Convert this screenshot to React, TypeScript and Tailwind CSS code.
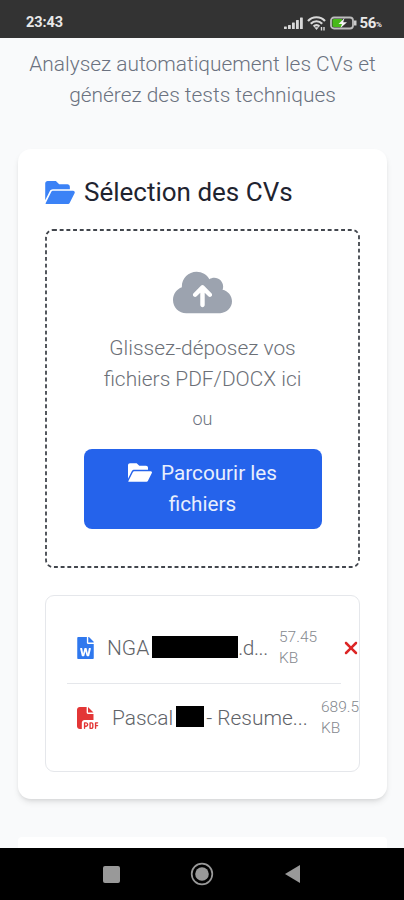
import { FaFileWord } from "react-icons/fa";
import { FaCloudArrowUp, FaFilePdf, FaXmark } from "react-icons/fa6";

function StatusBar() {
  return (
    <header className="flex h-[38px] shrink-0 items-center bg-[#333333] pt-[7px] pr-[22px] pl-[26px] text-[14px] font-bold text-[#e8e8e8]">
      <span className="grow pt-px text-[14.5px] tracking-[-0.1px]">23:43</span>
      <svg width="20" height="14" viewBox="0 0 20 14" fill="#d8d8d8">
        <rect x="0" y="10.5" width="2.8" height="2.5" rx="0.5" />
        <rect x="4" y="9" width="2.8" height="4" rx="0.5" />
        <rect x="8" y="6.5" width="2.8" height="6.5" rx="0.5" />
        <rect x="12" y="4" width="2.8" height="9" rx="0.5" />
        <rect x="16" y="1.5" width="2.8" height="11.5" rx="0.5" />
      </svg>
      <svg
        className="ml-[3px]"
        width="19"
        height="16"
        viewBox="0 0 19 16"
        fill="none"
        stroke="#d8d8d8"
        strokeWidth="2.2"
      >
        <path d="M1 6C5.5 1 13.5 1 18 6M3.8 8.8C7 5.4 12 5.4 15.2 8.8M6.6 11.5C8.3 9.7 10.7 9.7 12.4 11.5" />
        <path d="M7.2 12.3L9.5 15L11.8 12.3Z" fill="#d8d8d8" stroke="none" />
        <path d="M14.5 12V15.5M17 12V15.5" strokeWidth="1.4" />
      </svg>
      <svg className="ml-[4px]" width="27" height="14" viewBox="0 0 27 14">
        <rect
          x="1"
          y="1.5"
          width="22"
          height="11"
          rx="3"
          fill="#333333"
          stroke="#bdbdbd"
          strokeWidth="1.8"
        />
        <path d="M4 3H12V11H4Q2.5 11 2.5 9.5V4.5Q2.5 3 4 3Z" fill="#48b91a" />
        <path d="M14.5 2L8.5 8H12L10.5 12L17 6.2H13.2Z" fill="#f4f4f4" />
        <path d="M24 4.5H26.500V9.500H24Z" fill="#cccccc" />
      </svg>
      <span className="ml-[2px] pt-px text-[15px] tracking-[-0.3px]">56</span>
      <span className="pt-[5px] text-[8px]">%</span>
    </header>
  );
}

function FolderOpenIcon({ className }: { className: string }) {
  return (
    <svg className={className} viewBox="0 32 576 448" fill="currentColor">
      <path d="M147.8 192H480V144C480 117.500 458.500 96 432 96h-160l-64-64h-160C21.500 32 0 53.500 0 80v328.400l90.500-181.100C101.400 205.600 123.400 192 147.800 192z" />
      <path d="M543.100 224H147.800C135.700 224 124.600 230.800 119.200 241.700L8 464Q4 480 20 480h427.100c12.100 0 23.200-6.900 28.600-17.700l96-192C583.200 249 567.700 224 543.100 224z" />
    </svg>
  );
}

function DropZone() {
  return (
    <div className="relative mt-[20px] flex h-[339px] flex-col items-center px-[38px] pt-[37px] text-[#6b7280]">
      <svg
        className="pointer-events-none absolute inset-0"
        width="315"
        height="339"
        fill="none"
      >
        <rect
          x="1"
          y="1"
          width="313"
          height="337"
          rx="7"
          stroke="#42464d"
          strokeWidth="1.8"
          strokeDasharray="3.9 2.8"
        />
      </svg>
      <FaCloudArrowUp className="h-[53px] w-[59px] text-[#9ca3af]" />
      <p className="mt-[14px] text-center text-[20.9px] leading-[31px] whitespace-nowrap text-[#6c7077]">
        Glissez-déposez vos
        <br />
        fichiers PDF/DOCX ici
      </p>
      <p className="mt-[11px] text-[18px] leading-[26px]">ou</p>
      <button className="mt-[17px] h-[80px] w-[238px] rounded-[8px] bg-[#2563eb] text-[20.7px] leading-[31.5px] font-normal text-[#e8effd]">
        <FolderOpenIcon className="mr-[9px] inline h-[19px] w-[24px] align-[-2px] text-white" />
        Parcourir les
        <br />
        fichiers
      </button>
    </div>
  );
}

function FileList() {
  return (
    <ul className="mt-[27px] h-[177px] overflow-hidden rounded-[9px] border border-[#e5e7eb] px-[21px] pt-[17px] text-[20.9px] text-[#5f6368]">
      <li className="flex h-[71px] w-[274px] items-center border-b border-[#e5e7eb]">
        <FaFileWord className="ml-[10px] h-[22px] w-[17px] shrink-0 text-[#2f78ee]" />
        <span className="ml-[13px] flex w-[162px] shrink-0 items-center leading-[24px] whitespace-nowrap">
          NGA
          <span className="mb-[3px] ml-[3px] h-[22px] w-[86px] shrink-0 bg-black" />
          <span className="tracking-[-0.4px]">.d...</span>
        </span>
        <span className="ml-[10px] w-[48px] shrink-0 text-[15.5px] leading-[21px] text-[#85898f]">
          57.45 KB
        </span>
        <FaXmark className="ml-[14px] size-[20px] shrink-0 text-[#dc2626]" />
      </li>
      <li className="flex h-[68px] w-[273px] items-center">
        <FaFilePdf className="ml-[10px] h-[22px] w-[22px] shrink-0 text-[#e33636]" />
        <span className="ml-[13px] flex w-[198px] shrink-0 items-center leading-[24px] whitespace-nowrap">
          Pascal
          <span className="mr-[2px] mb-[3px] ml-[3px] h-[21px] w-[28px] shrink-0 bg-black" />
          - Resume...
        </span>
        <span className="ml-[11px] w-[48px] shrink-0 text-[15.5px] leading-[21px] text-[#85898f]">
          689.5 KB
        </span>
      </li>
    </ul>
  );
}

function NavigationBar() {
  return (
    <nav className="flex h-[52px] shrink-0 items-center justify-center gap-[70px] bg-black">
      <span className="size-[17px] rounded-[2px] bg-[#999999]" />
      <svg width="24" height="24" viewBox="0 0 24 24">
        <circle cx="12" cy="12" r="10.3" fill="none" stroke="#999999" strokeWidth="1.7" />
        <circle cx="12" cy="12" r="6.8" fill="#999999" />
      </svg>
      <svg width="17" height="20" viewBox="0 0 17 20">
        <path d="M16 1V19L1 10Z" fill="#999999" />
      </svg>
    </nav>
  );
}

export default function App() {
  return (
    <div className="flex h-[900px] w-[404px] flex-col overflow-hidden bg-[#f9fafb] font-['Roboto',sans-serif] font-light">
      <StatusBar />
      <main className="flex grow flex-col overflow-hidden pr-[17px] pl-[18px]">
        <p className="mt-[11px] text-center text-[20.9px] leading-[31px] whitespace-nowrap text-[#6b7280]">
          Analysez automatiquement les CVs et
          <br />
          générez des tests techniques
        </p>
        <section className="mt-[38px] h-[650px] shrink-0 rounded-[13px] bg-white px-[27px] pt-[26px] shadow-md">
          <h2 className="flex h-[34px] items-center gap-[9px] text-[26px] font-normal whitespace-nowrap text-[#1f2430]">
            <FolderOpenIcon className="h-[23px] w-[30px] text-[#3b82f6]" />
            Sélection des CVs
          </h2>
          <DropZone />
          <FileList />
        </section>
        <section className="mt-[38px] h-[40px] shrink-0 rounded-t-[4px] bg-white" />
      </main>
      <NavigationBar />
    </div>
  );
}
